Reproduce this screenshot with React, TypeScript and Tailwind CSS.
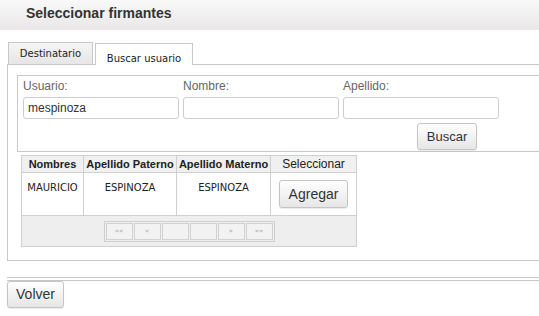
// Firmantes selector: header bar, tabs, search box, result grid, back button.

const BTN =
  'flex items-center justify-center rounded-[3px] border border-[#c4c4c4] bg-gradient-to-b from-white to-[#e6e6e6] text-[13px] text-[#333] shadow-[0_1px_1px_rgba(0,0,0,0.08)]'

const PAGER = ['«« ', '«', '', '', '»', '»»']

function Field({ label, value }: { label: string; value?: string }) {
  return (
    <div className="flex flex-col w-[156px]">
      <div className="h-[20px] leading-[20px] text-[12px] text-[#666]">{label}</div>
      <div className="mt-[1px] h-[22px] rounded-[3px] border border-[#ccc] bg-white px-[4px] text-[12px] leading-[20px] text-[#333]">
        {value}
      </div>
    </div>
  )
}

export default function App() {
  const cols = [
    { name: 'Nombres', w: 'w-[62px]' },
    { name: 'Apellido Paterno', w: 'w-[93px]' },
    { name: 'Apellido Materno', w: 'w-[94px]' },
  ]

  return (
    <div className="w-[539px] h-[316px] overflow-hidden bg-white font-['Liberation_Sans',Arial,sans-serif]">
      {/* Title bar */}
      <div className="h-[30px] flex items-center pl-[26px] pb-[4px] bg-gradient-to-b from-[#f9f9f9] to-[#e9e7e7]">
        <span className="text-[14px] font-bold text-[#333]">Seleccionar firmantes</span>
      </div>

      {/* Tabs */}
      <div className="mt-[12px] ml-[7px] pl-[1px] flex items-end gap-[2px] font-['DejaVu_Sans',Verdana,sans-serif] text-[10px] text-[#222]">
        <div className="h-[22px] w-[85px] border border-b-0 border-[#c8c8c8] bg-gradient-to-b from-[#f5f5f5] to-[#e6e6e6] flex justify-center pt-[5px] leading-[12px]">
          Destinatario
        </div>
        <div className="relative h-[22px] w-[98px] -mb-px border border-b-0 border-[#c8c8c8] bg-white flex justify-center pt-[9px] leading-[12px]">
          Buscar usuario
        </div>
      </div>

      {/* Tab panel */}
      <div className="ml-[7px] w-[545px] border border-[#c8c8c8] pl-[9px] pt-[10px] pb-[13px]">
        <div className="border border-[#c8c8c8] pl-[5px] pb-[1px]">
          <div className="flex gap-[4px]">
            <Field label="Usuario:" value="mespinoza" />
            <Field label="Nombre:" />
            <Field label="Apellido:" />
          </div>
          <div className={`${BTN} mt-[4px] ml-[394px] w-[60px] h-[27px]`}>Buscar</div>
        </div>

        {/* Results */}
        <div className="mt-[3px] ml-[4px] w-[336px] border border-[#cfcfcf]">
          <div className="flex h-[17px] bg-[#f0f0f0] border-b border-[#cfcfcf] text-[11px] text-[#222]">
            {cols.map(c => (
              <div key={c.name} className={`${c.w} border-r border-[#cfcfcf] flex items-center justify-center font-bold`}>
                {c.name}
              </div>
            ))}
            <div className="flex-1 flex items-center justify-center text-[12px]">Seleccionar</div>
          </div>
          <div className="flex h-[43px] border-b border-[#cfcfcf] font-['DejaVu_Sans',Verdana,sans-serif] text-[10px] text-[#222]">
            <div className="w-[62px] border-r border-[#cfcfcf] text-center pt-[7px]">MAURICIO</div>
            <div className="w-[93px] border-r border-[#cfcfcf] text-center pt-[7px]">ESPINOZA</div>
            <div className="w-[94px] border-r border-[#cfcfcf] text-center pt-[7px]">ESPINOZA</div>
            <div className="flex-1 flex justify-center pt-[7px]">
              <div className={`${BTN} w-[69px] h-[28px] font-['Liberation_Sans',Arial,sans-serif] text-[14px]`}>Agregar</div>
            </div>
          </div>
          <div className="h-[30px] bg-[#eeeeee] flex justify-center pt-[5px]">
            <div className="flex gap-[1px] p-[1px] h-[21px] border border-[#cfcfcf]">
              {PAGER.map((p, i) => (
                <div key={i} className="w-[27px] h-full border border-[#d2d2d2] bg-[#f2f2f2] flex items-center justify-center font-['DejaVu_Sans',sans-serif] text-[7px] leading-none text-[#a8a8a8]">
                  {p}
                </div>
              ))}
            </div>
          </div>
        </div>
      </div>

      {/* Separator + back */}
      <div className="mt-[16px] ml-[7px] h-[4px] border-t border-b border-[#c8c8c8]" />
      <div className={`${BTN} ml-[7px] w-[57px] h-[27px] text-[14px]`}>Volver</div>
    </div>
  )
}
